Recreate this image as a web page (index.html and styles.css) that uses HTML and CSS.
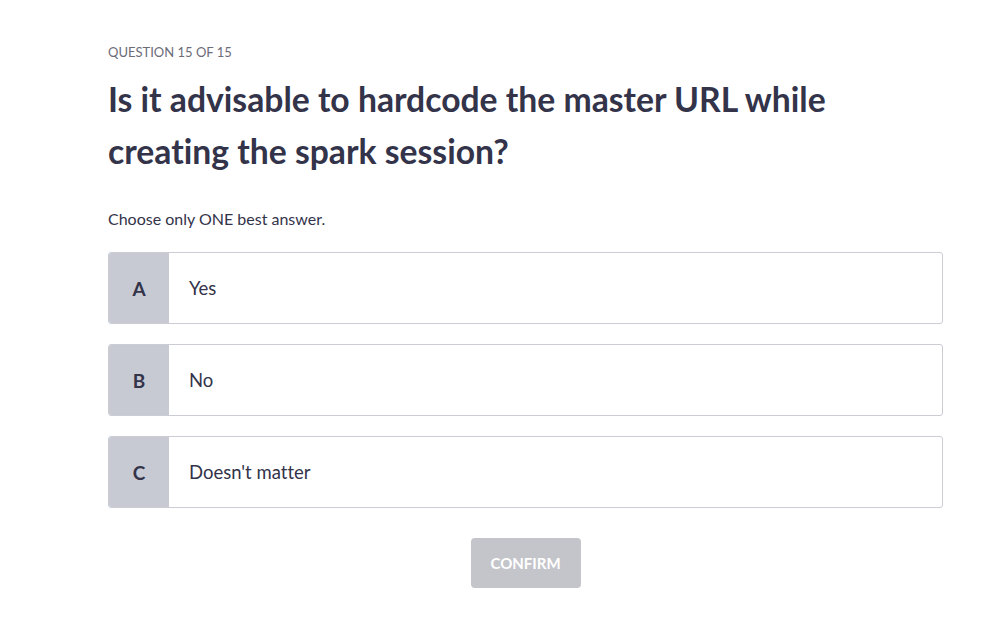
FILE: index.html
```html
<!DOCTYPE html>
<html>
<head>
<meta charset="utf-8">
<link rel="stylesheet" href="styles.css">
</head>
<body>
<main class="quiz">
  <div class="counter">QUESTION 15 OF 15</div>
  <h1 class="question">Is it advisable to hardcode the master URL while creating the spark session?</h1>
  <p class="hint">Choose only ONE best answer.</p>
  <div class="options">
    <div class="option"><span class="letter">A</span><span class="label">Yes</span></div>
    <div class="option"><span class="letter">B</span><span class="label">No</span></div>
    <div class="option"><span class="letter">C</span><span class="label">Doesn't matter</span></div>
  </div>
  <div class="actions"><button class="confirm">CONFIRM</button></div>
</main>
</body>
</html>
```
FILE: styles.css
```css
html, body { margin: 0; padding: 0; background: #fff; }
body { font-family: Lato, "Noto Sans", sans-serif; color: #33334a; font-variant-ligatures: none; }
.quiz { width: 835px; margin-left: 108px; padding-top: 43px; }
.counter { font-size: 13px; color: #6c6c78; line-height: 18px; }
.question { font-size: 33.7px; font-weight: 700; line-height: 52px; margin: 12px 0 0; color: #33334a; max-width: 760px; }
.hint { font-size: 16px; margin: 32px 0 0; line-height: 20px; color: #33334a; }
.options { display: flex; flex-direction: column; gap: 20px; margin-top: 23px; }
.option { display: flex; height: 70px; border: 1px solid #cbccd4; border-radius: 3px; overflow: hidden; }
.letter { width: 60px; background: #c8cad3; display: flex; align-items: center; justify-content: center; font-size: 19px; font-weight: 700; color: #33334a; }
.label { display: flex; align-items: center; padding-left: 20px; font-size: 18.5px; color: #33334a; }
.actions { display: flex; justify-content: center; margin-top: 30px; }
.confirm { width: 110px; height: 50px; border: none; border-radius: 4px; background: #c4c5ca; color: #fff; font-family: inherit; font-size: 15px; font-weight: 700; }
```
